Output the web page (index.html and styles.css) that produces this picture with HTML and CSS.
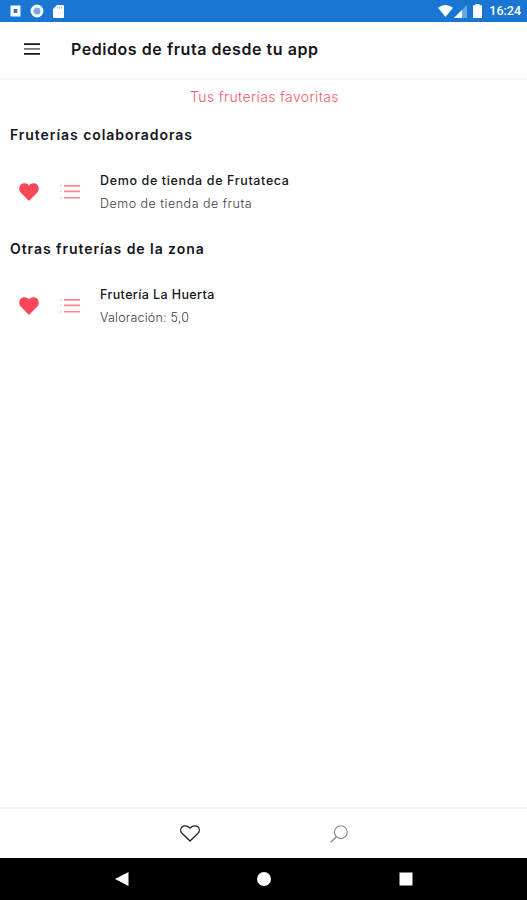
FILE: index.html
```html
<!DOCTYPE html>
<html lang="es">
<head>
    <meta charset="UTF-8">
    <meta name="viewport" content="width=device-width, initial-scale=1.0">
    <title>Pedidos de fruta desde tu app</title>
    <link rel="stylesheet" href="styles.css">
</head>
<body>
    <!-- Shared icons -->
    <svg class="icon-defs">
        <symbol id="heart" viewBox="0 0 20 18">
            <path d="M10 18 L1.9 9.8 C-0.4 7.3 -0.2 3.6 2 1.6 C4.4 -0.6 8 -0.1 10 2.5 C12 -0.1 15.6 -0.6 18 1.6 C20.2 3.6 20.4 7.3 18.1 9.8 Z" fill="#fa4659"/>
        </symbol>
        <symbol id="list" viewBox="0 0 20 16">
            <g fill="#fa4659">
                <path d="M4 1h16v1.7H4zM4 6.6h16v1.6H4zM4 12.9h16v1.6H4z" opacity="0.65"/>
                <path d="M0 1h1.5v1.5H0zM0 6.6h1.5v1.5H0zM0 12.9h1.5v1.5H0z" opacity="0.35"/>
            </g>
        </symbol>
    </svg>

    <div class="status-bar">
        <div class="status-left">
            <svg width="11" height="12" viewBox="0 0 11 12">
                <path d="M0.5 0.5h10v11h-10z" fill="#fff"/>
                <path d="M3.7 4h3.6v4H3.7z" fill="#1976d2"/>
            </svg>
            <svg width="14" height="14" viewBox="0 0 14 14">
                <circle cx="7" cy="7" r="5" fill="#75aae3" stroke="#fff" stroke-width="2.8"/>
            </svg>
            <svg width="11" height="13" viewBox="0 0 11 13">
                <path d="M4 0h6q1 0 1 1v11q0 1-1 1H1q-1 0-1-1V4z" fill="#fff"/>
                <path d="M4.5 1.5v2M6.5 1.5v2M8.5 1.5v2" stroke="#8bb9e8" stroke-width="1"/>
            </svg>
        </div>
        <div class="status-right">
            <svg width="15" height="12" viewBox="0 0 15 12">
                <path d="M0 2.7Q7.5 -2.7 15 2.7L7.5 12z" fill="#fff"/>
            </svg>
            <svg class="signal" width="13" height="13" viewBox="0 0 13 13">
                <path d="M0 13L13 0v13z" fill="#68a4e1"/>
                <path d="M0 13L8 5v8z" fill="#fff"/>
            </svg>
            <svg class="battery" width="9" height="14" viewBox="0 0 9 14">
                <path d="M2.5 0h4v1.2H9V14H0V1.2h2.5z" fill="#fff"/>
            </svg>
            <span class="clock">16:24</span>
        </div>
    </div>

    <header class="app-header">
        <svg class="menu-icon" width="16" height="12" viewBox="0 0 16 12">
            <path d="M0 0.3h16v1.7H0zM0 10h16v1.7H0z" fill="#15151c"/>
            <path d="M0 5h16v1.8H0z" fill="#77777b"/>
        </svg>
        <h1 class="app-title">Pedidos de fruta desde tu app</h1>
    </header>

    <main class="content">
        <p class="subtitle">Tus fruterías favoritas</p>

        <section class="shop-group">
            <h2 class="group-title">Fruterías colaboradoras</h2>
            <div class="shop">
                <svg class="heart-icon"><use href="#heart"/></svg>
                <svg class="list-icon"><use href="#list"/></svg>
                <div class="shop-info">
                    <h3 class="shop-name">Demo de tienda de Frutateca</h3>
                    <p class="shop-detail">Demo de tienda de fruta</p>
                </div>
            </div>
        </section>

        <section class="shop-group">
            <h2 class="group-title">Otras fruterías de la zona</h2>
            <div class="shop">
                <svg class="heart-icon"><use href="#heart"/></svg>
                <svg class="list-icon"><use href="#list"/></svg>
                <div class="shop-info">
                    <h3 class="shop-name compact">Frutería La Huerta</h3>
                    <p class="shop-detail rating">Valoración: 5,0</p>
                </div>
            </div>
        </section>
    </main>

    <nav class="tab-bar">
        <svg width="20" height="17" viewBox="0 0 20 17">
            <path d="M10 16L2 8.3C0.2 6.4 0.4 3.6 2 2C4 0.2 7.6 0.4 10 3.2C12.4 0.4 16 0.2 18 2C19.6 3.6 19.8 6.4 18 8.3Z" fill="none" stroke="#22222c" stroke-width="1.3"/>
        </svg>
        <svg class="search-icon" width="18" height="18" viewBox="0 0 18 18">
            <circle cx="10.8" cy="7.2" r="6.4" fill="none" stroke="#85858a" stroke-width="1.1"/>
            <path d="M6.3 11.8L0.8 17.3" stroke="#85858a" stroke-width="1.4"/>
        </svg>
    </nav>

    <div class="system-nav">
        <svg width="14" height="14" viewBox="0 0 14 14"><path d="M0 7L13.5 0v14z" fill="#fff"/></svg>
        <svg width="14" height="14" viewBox="0 0 14 14"><circle cx="7" cy="7" r="7" fill="#fff"/></svg>
        <svg width="14" height="14" viewBox="0 0 14 14"><path d="M0.5 0.5h13v13h-13z" fill="#fff"/></svg>
    </div>
</body>
</html>
```

FILE: styles.css
```css
* {
    margin: 0;
    padding: 0;
    box-sizing: border-box;
}

body {
    display: flex;
    flex-direction: column;
    height: 100vh;
    background: #fff;
    color: #15151c;
    font-family: 'Inter', sans-serif;
    overflow: hidden;
}

svg {
    display: block;
    flex-shrink: 0;
}

.icon-defs {
    display: none;
}

.status-bar {
    display: flex;
    justify-content: space-between;
    align-items: center;
    height: 22px;
    padding: 0 6px 0 10px;
    background: #1976d2;
    color: #fff;
}

.status-left,
.status-right {
    display: flex;
    align-items: center;
}

.status-left {
    gap: 9px;
}

.signal {
    margin-left: 1px;
}

.battery {
    margin: 0 7px 0 6px;
}

.clock {
    font-family: 'Roboto', sans-serif;
    font-size: 12.5px;
    font-weight: 500;
    line-height: 22px;
}

.app-header {
    display: flex;
    align-items: center;
    height: 58px;
    padding: 0 24px 2px;
    border-bottom: 2px solid #f5f5f5;
}

.app-title {
    margin-left: 31px;
    font-size: 16px;
    font-weight: 600;
    line-height: 20px;
    letter-spacing: 0.55px;
    white-space: nowrap;
}

.content {
    flex: 1;
}

.subtitle {
    height: 34px;
    padding-left: 2px;
    color: #f5596c;
    font-size: 14px;
    font-weight: 300;
    line-height: 34px;
    letter-spacing: 0.37px;
    text-align: center;
}

.shop-group {
    height: 114px;
    padding-left: 10px;
}

.group-title {
    font-size: 14px;
    font-weight: 600;
    line-height: 42px;
    letter-spacing: 0.94px;
}

.shop {
    display: flex;
    align-items: center;
    height: 72px;
    padding-left: 9px;
}

.heart-icon {
    width: 20px;
    height: 18px;
}

.list-icon {
    width: 20px;
    height: 16px;
    margin: 0 20px 0 21px;
}

.shop-name {
    font-size: 12.5px;
    font-weight: 500;
    line-height: 22px;
    letter-spacing: 0.64px;
}

.shop-name.compact {
    letter-spacing: 0.4px;
}

.shop-detail {
    color: #3c3c42;
    font-size: 12.5px;
    font-weight: 300;
    line-height: 23px;
    letter-spacing: 0.5px;
}

.shop-detail.rating {
    letter-spacing: 0.2px;
}

.tab-bar {
    display: flex;
    justify-content: center;
    align-items: center;
    gap: 130px;
    height: 51px;
    border-top: 2px solid #f5f5f5;
}

.system-nav {
    display: flex;
    justify-content: center;
    align-items: center;
    gap: 128px;
    height: 42px;
    padding-left: 1px;
    background: #000;
}
```
